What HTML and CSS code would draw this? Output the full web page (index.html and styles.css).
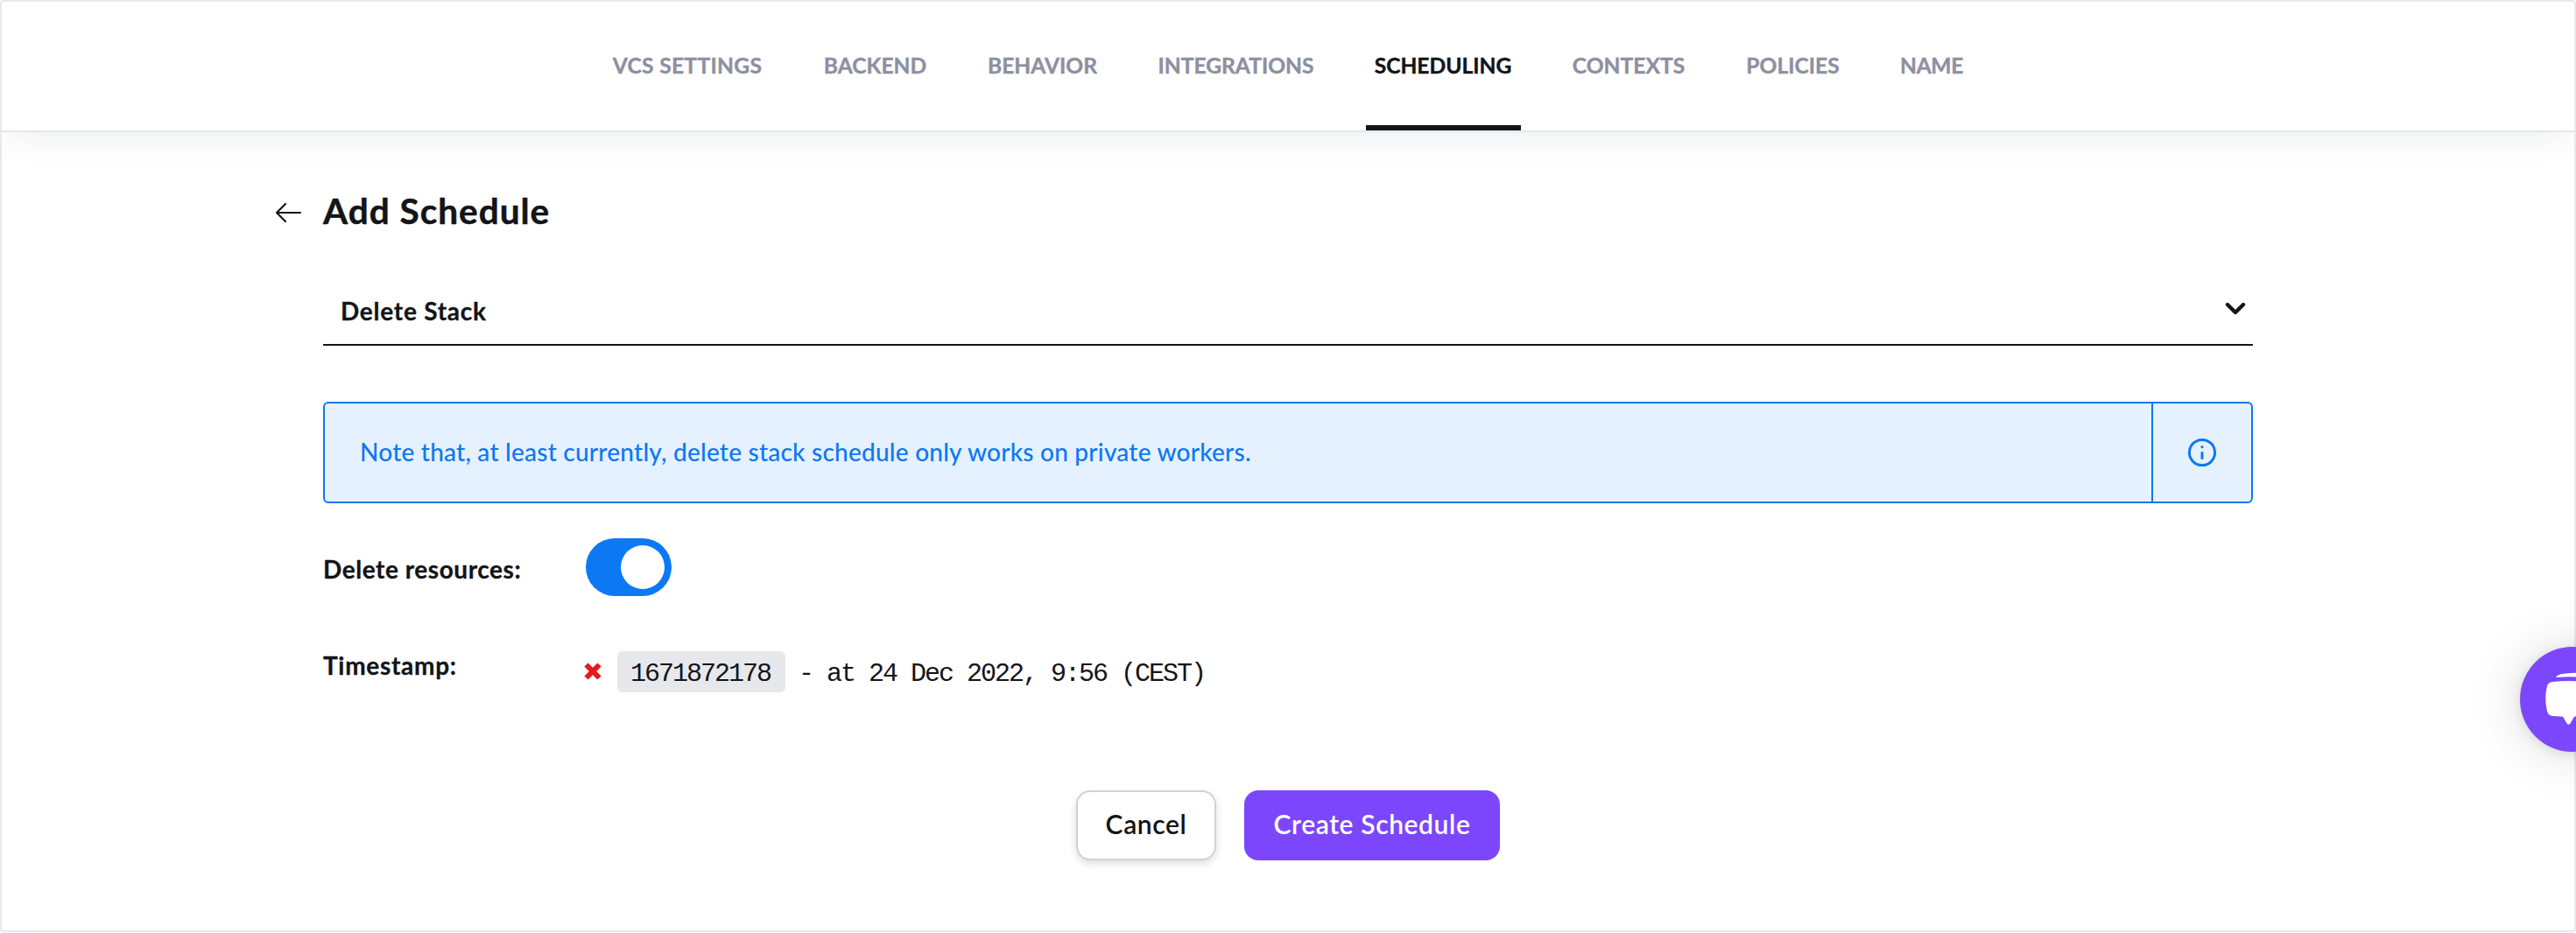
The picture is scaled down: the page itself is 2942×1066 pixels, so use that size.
FILE: index.html
```
<!DOCTYPE html>
<html lang="en">
<head>
<meta charset="utf-8">
<title>Add Schedule</title>
<link rel="stylesheet" href="styles.css">
</head>
<body>
<div class="frame">
  <nav class="tabs">
    <a class="tab tab-vcs">VCS SETTINGS</a>
    <a class="tab">BACKEND</a>
    <a class="tab">BEHAVIOR</a>
    <a class="tab">INTEGRATIONS</a>
    <a class="tab tab-active">SCHEDULING</a>
    <a class="tab">CONTEXTS</a>
    <a class="tab">POLICIES</a>
    <a class="tab tab-name">NAME</a>
  </nav>
  <main class="content">
    <header class="title-row">
      <svg class="back" width="32" height="24" viewBox="0 0 32 24"><path d="M30 12H3M13 2L3 12L13 22" fill="none" stroke="currentColor" stroke-width="2.2" stroke-linecap="round" stroke-linejoin="round"/></svg>
      <h1 class="title">Add Schedule</h1>
    </header>
    <div class="select">
      <span class="select-value">Delete Stack</span>
      <svg width="24" height="16" viewBox="0 0 24 16"><path d="M3 3L12 12L21 3" fill="none" stroke="currentColor" stroke-width="4.4" stroke-linecap="round" stroke-linejoin="round"/></svg>
    </div>
    <div class="alert">
      <p class="alert-text">Note that, at least currently, delete stack schedule only works on private workers.</p>
      <div class="alert-icon">
        <svg width="34" height="34" viewBox="0 0 34 34"><circle cx="17" cy="17" r="14.6" fill="none" stroke="currentColor" stroke-width="3"/><path d="M17 17.3V23.6M17 10.6V10.7" fill="none" stroke="currentColor" stroke-width="3" stroke-linecap="round"/></svg>
      </div>
    </div>
    <div class="row row-toggle">
      <span class="label label-resources">Delete resources:</span>
      <span class="toggle"><span class="knob"></span></span>
    </div>
    <div class="row row-time">
      <span class="label label-time">Timestamp:</span>
      <svg class="remove" width="20" height="20" viewBox="0 0 20 20"><path d="M2.500 2.500L17.500 17.500M17.500 2.500L2.500 17.500" stroke="#e51a1a" stroke-width="6"/></svg>
      <code class="stamp">1671872178</code>
      <span class="date">- at 24 Dec 2022, 9:56 (CEST)</span>
    </div>
    <div class="actions">
      <button class="btn btn-cancel">Cancel</button>
      <button class="btn btn-create">Create Schedule</button>
    </div>
  </main>
</div>
<div class="chat">
  <svg width="120" height="120" viewBox="0 0 120 120"><path d="M41 35C43 31.500 47 31 52 30.500Q68 29 84 31Q92 32 93 39V62Q93 68 90 70V48Q89 37 80 35.500Q60 33.500 41 35Z" fill="#fff"/><path d="M37 40Q56 38 76 40Q82 41 83 47Q85 59 83 71Q82 78 76 79L62 79.700L57.500 87.500Q55.500 90 53.500 87.500L49 79.700L37 79Q31 78 30.500 71Q28 59 30.500 47Q31 41 37 40Z" fill="#fff"/></svg>
</div>
</body>
</html>
```
FILE: styles.css
```
* { box-sizing: border-box; }

body {
  position: relative;
  height: 1066px;
  margin: 0;
  background: #fff;
  color: #131418;
  font-family: Lato, "Open Sans", sans-serif;
  overflow: hidden;
}

.frame {
  height: 1065px;
  border: 2px solid #e8e8ee;
  border-radius: 4px;
  overflow: hidden;
}

.tabs {
  display: grid;
  grid-template-columns: 193px 138px 146px 198px 177px 149px 128px 91px;
  column-gap: 49px;
  justify-content: center;
  height: 149px;
  padding-right: 1px;
  border-bottom: 2px solid #e7e8ea;
  box-shadow: 0 10px 40px -10px rgba(20, 30, 60, .1);
}

.tab {
  display: flex;
  align-items: center;
  justify-content: center;
  padding: 4px 1px 0 0;
  border-bottom: 6px solid transparent;
  color: #8d90a0;
  font-size: 24.6px;
  font-weight: 700;
  white-space: nowrap;
  -webkit-text-stroke: .4px currentColor;
}

.tab-vcs { letter-spacing: .3px; }
.tab-name { letter-spacing: -.4px; }
.tab-active { color: #131418; border-bottom-color: #131418; }

.content {
  width: 2204px;
  margin: 0 auto;
  padding-top: 64px;
}

.title-row {
  display: flex;
  align-items: center;
  gap: 24px;
  height: 48px;
  margin-left: -56px;
}

.back { margin-top: 8px; }

.title {
  margin: 0;
  padding-top: 3px;
  font-size: 40.5px;
  line-height: 48px;
  font-weight: 700;
  letter-spacing: 1px;
  -webkit-text-stroke: .5px currentColor;
}

.select {
  display: flex;
  align-items: center;
  justify-content: space-between;
  height: 82px;
  margin-top: 50px;
  padding: 0 8px 0 20px;
  border-bottom: 2px solid #131418;
}

.select-value {
  padding-top: 3px;
  font-size: 28px;
  font-weight: 700;
  letter-spacing: .75px;
  -webkit-text-stroke: .3px currentColor;
}

.alert {
  display: flex;
  height: 116px;
  margin-top: 64px;
  border: 2px solid #0d78f4;
  border-radius: 6px;
  background: #e5f1fe;
  color: #0d78f4;
}

.alert-text {
  display: flex;
  align-items: center;
  flex: 1;
  margin: 0;
  padding: 0 0 2px 40px;
  font-size: 28px;
  font-weight: 500;
  letter-spacing: .23px;
}

.alert-icon {
  display: flex;
  align-items: center;
  justify-content: center;
  width: 114px;
  border-left: 2px solid #0d78f4;
}

.row { display: flex; }

.label {
  font-size: 28px;
  line-height: 30px;
  font-weight: 700;
  -webkit-text-stroke: .3px currentColor;
}

.row-toggle {
  align-items: center;
  margin-top: 40px;
}

.label-resources {
  width: 300px;
  padding-top: 4px;
  letter-spacing: .55px;
}

.toggle {
  display: flex;
  justify-content: flex-end;
  width: 98px;
  height: 66px;
  padding: 8px;
  border-radius: 33px;
  background: #0d78f4;
}

.knob {
  width: 50px;
  height: 50px;
  border-radius: 50%;
  background: #fff;
}

.row-time {
  height: 47px;
  margin-top: 63px;
}

.label-time {
  width: 298px;
  padding-top: 1px;
  letter-spacing: .7px;
}

.remove { margin: 13px 18px 0 0; }

.stamp,
.date {
  font-family: "Liberation Mono", monospace;
  font-size: 30px;
  line-height: 52px;
  letter-spacing: -2.003px;
  white-space: pre;
}

.stamp {
  width: 192px;
  height: 47px;
  padding: 0 15px;
  border-radius: 6px;
  background: #e7e8ec;
}

.date { margin-left: 15px; }

.actions {
  display: flex;
  justify-content: center;
  gap: 32px;
  margin-top: 112px;
}

.btn {
  height: 80px;
  padding: 0 0 4px;
  border-radius: 16px;
  font-family: inherit;
  font-size: 30px;
  font-weight: 600;
  letter-spacing: .6px;
}

.btn-cancel {
  width: 160px;
  border: 2px solid #d1d0db;
  background: #fff;
  color: #131418;
  box-shadow: 0 4px 8px rgba(20, 20, 40, .14);
}

.btn-create {
  width: 292px;
  border: 0;
  background: #7c47fc;
  color: #fff;
}

/* Floating chat launcher, partly past the right edge */
.chat {
  position: absolute;
  top: 739px;
  right: -56px;
  width: 120px;
  height: 120px;
  border-radius: 50%;
  background: #7c47fc;
  box-shadow: 0 2px 12px rgba(0, 0, 0, .1), 0 2px 60px rgba(0, 0, 0, .15);
}
```
